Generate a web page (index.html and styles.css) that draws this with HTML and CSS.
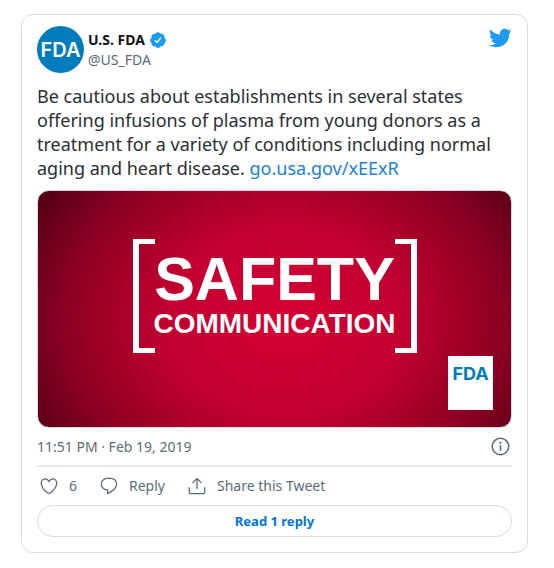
FILE: index.html
```html
<!DOCTYPE html>
<html lang="en">
<head>
    <meta charset="UTF-8">
    <meta name="viewport" content="width=device-width, initial-scale=1.0">
    <title>U.S. FDA on Twitter</title>
    <link rel="stylesheet" href="styles.css">
</head>
<body>
    <article class="tweet">
        <header class="tweet-header">
            <a class="avatar" href="#">FDA</a>
            <div class="author">
                <a class="author-name" href="#">
                    U.S. FDA
                    <svg class="verified" viewBox="0 0 24 24" aria-label="Verified account">
                        <path fill="#1d9bf0" d="M22.5 12.5c0-1.58-.875-2.95-2.148-3.6.154-.435.238-.905.238-1.4 0-2.21-1.71-3.998-3.818-3.998-.47 0-.92.084-1.336.25C14.818 2.415 13.51 1.5 12 1.5s-2.816.917-3.437 2.25c-.415-.165-.866-.25-1.336-.25-2.11 0-3.818 1.79-3.818 4 0 .494.083.964.237 1.4-1.272.65-2.147 2.018-2.147 3.6 0 1.495.782 2.798 1.942 3.486-.02.17-.032.34-.032.514 0 2.21 1.708 4 3.818 4 .47 0 .92-.086 1.335-.25.62 1.334 1.926 2.25 3.437 2.25 1.512 0 2.818-.916 3.437-2.25.415.163.865.248 1.336.248 2.11 0 3.818-1.79 3.818-4 0-.174-.012-.344-.033-.513 1.158-.687 1.943-1.99 1.943-3.484z"/>
                        <path fill="none" stroke="#fff" stroke-width="1.8" stroke-linecap="round" stroke-linejoin="round" d="M8.4 12.8l2.6 2.4 4.4-5.8"/>
                    </svg>
                </a>
                <a class="author-handle" href="#">@US_FDA</a>
            </div>
            <a class="bird" href="#" aria-label="View on Twitter">
                <svg viewBox="0 0 24 24">
                    <path d="M23.643 4.937c-.835.37-1.732.62-2.675.733.962-.576 1.7-1.49 2.048-2.578-.9.534-1.897.922-2.958 1.13-.85-.904-2.06-1.47-3.4-1.47-2.572 0-4.658 2.086-4.658 4.66 0 .364.042.718.12 1.06-3.873-.195-7.304-2.05-9.602-4.868-.4.69-.63 1.49-.63 2.342 0 1.616.823 3.043 2.072 3.878-.764-.025-1.482-.234-2.11-.583v.06c0 2.257 1.605 4.14 3.737 4.568-.392.106-.803.162-1.227.162-.3 0-.593-.028-.877-.082.593 1.85 2.313 3.198 4.352 3.234-1.595 1.25-3.604 1.995-5.786 1.995-.376 0-.747-.022-1.112-.065 2.062 1.323 4.51 2.093 7.14 2.093 8.57 0 13.255-7.098 13.255-13.254 0-.2-.005-.402-.014-.602.91-.658 1.7-1.477 2.323-2.41z"/>
                </svg>
            </a>
        </header>

        <p class="tweet-text">Be cautious about establishments in several states offering infusions of plasma from young donors as a treatment for a variety of conditions including normal aging and heart disease. <a href="#">go.usa.gov/xEExR</a></p>

        <div class="media">
            <div class="bracket bracket-left"></div>
            <div class="media-title">
                <span class="media-safety">SAFETY</span>
                <span class="media-communication">COMMUNICATION</span>
            </div>
            <div class="bracket bracket-right"></div>
            <div class="media-logo">FDA</div>
        </div>

        <div class="tweet-meta">
            <a class="tweet-time" href="#">11:51 PM · Feb 19, 2019</a>
            <a class="info" href="#" aria-label="Twitter Ads info and privacy">
                <svg viewBox="0 0 20 20">
                    <circle cx="9.5" cy="9.5" r="7.5" fill="none" stroke="currentColor" stroke-width="1.4"/>
                    <circle cx="9.5" cy="6.2" r="1"/>
                    <path d="M8.8 8.3h1.4v5.2H8.8z"/>
                </svg>
            </a>
        </div>

        <div class="actions">
            <button class="action" type="button" aria-label="Like">
                <svg viewBox="0 0 24 24">
                    <path d="M12 21.638h-.014C9.403 21.59 1.95 14.856 1.95 8.478c0-3.064 2.525-5.754 5.403-5.754 2.29 0 3.83 1.58 4.646 2.73.814-1.148 2.354-2.73 4.645-2.73 2.88 0 5.404 2.69 5.404 5.755 0 6.376-7.454 13.11-10.037 13.157H12zM7.354 4.225c-2.08 0-3.903 1.988-3.903 4.255 0 5.74 7.034 11.596 8.55 11.658 1.518-.062 8.55-5.917 8.55-11.658 0-2.267-1.823-4.255-3.903-4.255-2.528 0-3.94 2.936-3.952 2.965-.23.562-1.156.562-1.387 0-.014-.03-1.425-2.965-3.954-2.965z"/>
                </svg>
                6
            </button>
            <button class="action" type="button">
                <svg viewBox="0 0 24 24">
                    <path d="M14.046 2.242l-4.148-.01h-.002c-4.374 0-7.8 3.427-7.8 7.802 0 4.098 3.186 7.206 7.465 7.37v3.828c0 .108.044.286.12.403.142.225.384.347.632.347.138 0 .277-.038.402-.118.264-.168 6.473-4.14 8.088-5.506 1.902-1.61 3.04-3.97 3.043-6.312v-.017c-.006-4.367-3.43-7.787-7.8-7.788zm3.787 12.972c-1.134.96-4.862 3.405-6.772 4.643V16.67c0-.414-.335-.75-.75-.75h-.396c-3.66 0-6.318-2.476-6.318-5.886 0-3.534 2.768-6.302 6.3-6.302l4.147.01h.002c3.532 0 6.3 2.766 6.302 6.296-.003 1.91-.942 3.844-2.514 5.176z"/>
                </svg>
                Reply
            </button>
            <button class="action" type="button">
                <svg viewBox="0 0 24 24">
                    <path d="M17.53 7.47l-5-5c-.293-.293-.768-.293-1.06 0l-5 5c-.294.293-.294.768 0 1.06s.767.294 1.06 0l3.72-3.72V15c0 .414.336.75.75.75s.75-.336.75-.75V4.81l3.72 3.72c.146.147.338.22.53.22s.384-.072.53-.22c.293-.293.293-.767 0-1.06z"/>
                    <path d="M19.708 21.944H4.292C3.028 21.944 2 20.916 2 19.652V14c0-.414.336-.75.75-.75s.75.336.75.75v5.652c0 .437.355.792.792.792h15.416c.437 0 .792-.355.792-.792V14c0-.414.336-.75.75-.75s.75.336.75.75v5.652c0 1.264-1.028 2.292-2.292 2.292z"/>
                </svg>
                Share this Tweet
            </button>
        </div>

        <a class="read-replies" href="#">Read 1 reply</a>
    </article>
</body>
</html>
```
FILE: styles.css
```css
* {
    margin: 0;
    padding: 0;
    box-sizing: border-box;
}

body {
    background: #fff;
    padding: 14px 26px 14px 21px;
    font-family: 'Segoe UI', 'Noto Sans', 'Open Sans', sans-serif;
    font-size: 14px;
    line-height: 20px;
    color: #5b6b78;
}

a {
    color: inherit;
    text-decoration: none;
}

svg {
    display: block;
    fill: currentColor;
}

.tweet {
    border: 1px solid #d5dee3;
    border-radius: 12px;
    padding: 11px 15px 15px;
}

/* Header */
.tweet-header {
    display: flex;
    align-items: flex-start;
    gap: 4px;
}

.avatar {
    display: flex;
    align-items: center;
    justify-content: center;
    width: 47px;
    height: 47px;
    border-radius: 50%;
    background: #007cba;
    color: #fff;
    font-family: Inter, sans-serif;
    font-size: 20px;
    font-weight: 600;
}

.author {
    flex: 1;
    padding-top: 4px;
}

.author-name {
    display: flex;
    align-items: center;
    gap: 4px;
    color: #0f1419;
    font-weight: 700;
}

.author-handle {
    display: block;
}

.verified {
    width: 18px;
    height: 18px;
}

.bird {
    color: #1d9bf0;
}

.bird svg {
    width: 24px;
    height: 24px;
}

/* Text */
.tweet-text {
    margin-top: 11px;
    font-size: 18px;
    line-height: 24px;
    color: #292f33;
}

.tweet-text a {
    color: #1a7fe0;
}

/* Media card */
.media {
    position: relative;
    display: flex;
    justify-content: center;
    align-items: flex-start;
    margin-top: 10px;
    padding-top: 48px;
    aspect-ratio: 2 / 1;
    border: 1px solid #cfd9de;
    border-radius: 12px;
    background: radial-gradient(ellipse 62% 100% at 52% 55%, #d60034 0%, #c20030 40%, #8a0022 75%, #4d0012 100%) border-box;
    color: #fff;
    font-family: 'Liberation Sans', Arial, sans-serif;
    font-weight: 700;
}

.bracket {
    width: 22px;
    height: 114px;
    border: 5px solid #fff;
}

.bracket-left {
    border-left-width: 6px;
    border-right: none;
}

.bracket-right {
    border-right-width: 6px;
    border-left: none;
}

.media-title {
    display: flex;
    flex-direction: column;
    align-items: center;
    width: 240px;
    padding-top: 12px;
}

.media-safety {
    font-size: 61px;
    line-height: 56px;
}

.media-communication {
    font-size: 28px;
    line-height: 34px;
}

.media-logo {
    position: absolute;
    right: 18px;
    bottom: 17px;
    width: 45px;
    height: 54px;
    padding-top: 8px;
    background: #fff;
    color: #007cba;
    font-family: Inter, sans-serif;
    font-size: 18px;
    text-align: center;
}

/* Date and info */
.tweet-meta {
    display: flex;
    align-items: center;
    justify-content: space-between;
    padding: 8px 0 7px;
    border-bottom: 2px solid #e6ecf0;
}

.info svg {
    width: 22px;
    height: 22px;
}

/* Actions */
.actions {
    display: flex;
    gap: 22px;
    padding: 9px 2px;
}

.action {
    display: flex;
    align-items: center;
    gap: 10px;
    border: none;
    background: none;
    color: inherit;
    font: inherit;
    cursor: pointer;
}

.action svg {
    width: 20px;
    height: 20px;
}

.read-replies {
    display: block;
    padding: 5px 16px;
    border: 1px solid #d5dee3;
    border-radius: 16px;
    color: #0073e0;
    font-size: 13px;
    font-weight: 700;
    text-align: center;
}

.read-replies:hover {
    background: #eef6fd;
}
```
